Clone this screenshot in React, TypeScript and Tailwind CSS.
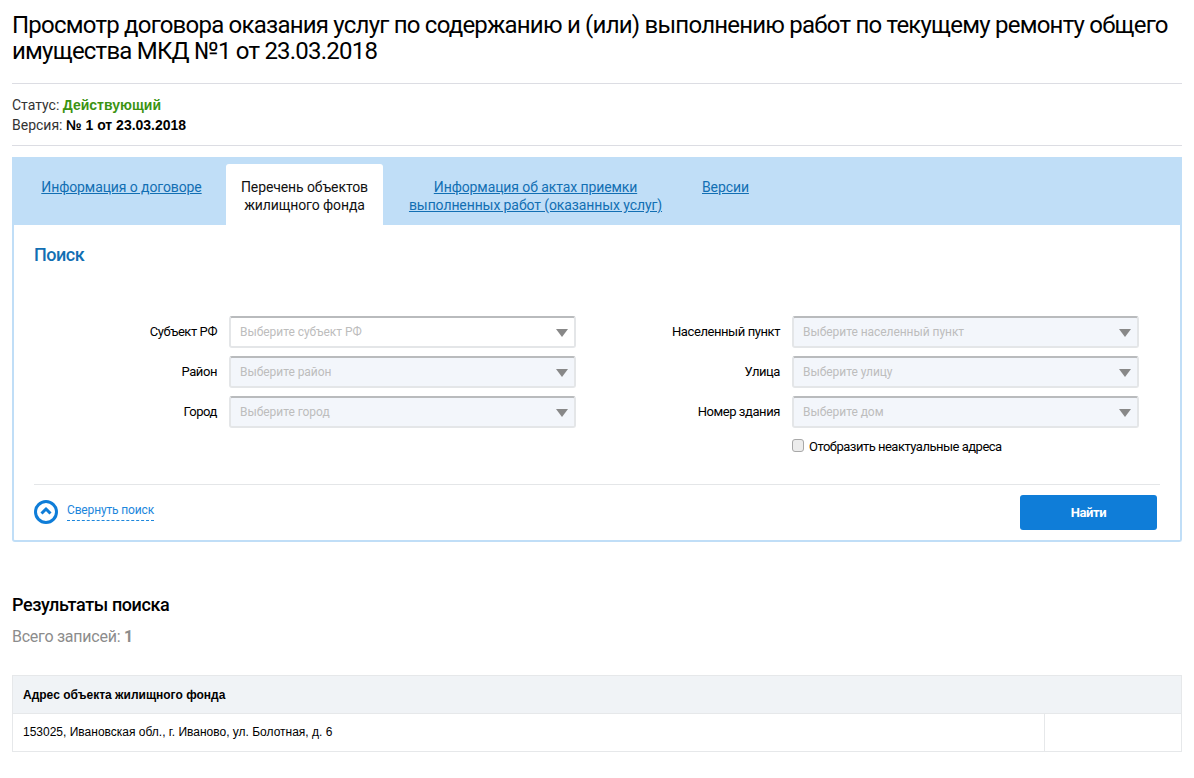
import React from 'react';

const Select = ({ text, active = false }: { text: string; active?: boolean }) => (
  <div
    className={`flex items-center justify-between w-[347px] h-[32px] rounded-[3px] border-2 border-[#e4e6e8] border-t-[#b9bbbd] pl-[9px] pr-[6px] ${
      active ? 'bg-white' : 'bg-[#f3f6fb]'
    }`}
  >
    <span className="text-[12px] tracking-[-0.05px] text-[#bdbdbd]">{text}</span>
    <svg width="12" height="8" viewBox="0 0 12 8" className="mt-px">
      <path d="M0 0h12L6 8z" fill="#888888" />
    </svg>
  </div>
);

const Field = ({ label, labelWidth, children }: { label: string; labelWidth: string; children: React.ReactNode }) => (
  <div className="flex items-center gap-[12px]">
    <span className={`${labelWidth} text-right text-[13px] tracking-[-0.42px] text-black`}>{label}</span>
    {children}
  </div>
);

export default function App() {
  return (
    <div className="min-h-[778px] bg-white px-[12px] font-['Roboto',sans-serif] text-black overflow-hidden">
      <h1 className="pt-[12px] pb-[19px] text-[24px] leading-[26px] tracking-[-0.78px] border-b border-[#dcdde3]">
        Просмотр договора оказания услуг по содержанию и (или) выполнению работ по текущему ремонту общего имущества МКД №1 от 23.03.2018
      </h1>

      <div className="pt-[11px] pb-[10px] text-[14px] leading-[20px] border-b border-[#dcdde3]">
        <div>
          <span className="text-[#333333]">Статус: </span>
          <b className="font-['Liberation_Sans',sans-serif] text-[#3b9312]">Действующий</b>
        </div>
        <div>
          <span className="text-[#333333]">Версия: </span>
          <b className="font-['Liberation_Sans',sans-serif]">№ 1 от 23.03.2018</b>
        </div>
      </div>

      <div className="mt-[11px] h-[68px] bg-[#c0def7] flex items-end text-[14px] leading-[18px] tracking-[-0.1px]">
        <div className="w-[214px] h-[61px] pt-[14px] pl-[5px] text-center">
          <a className="text-[#126fb3] underline">Информация о договоре</a>
        </div>
        <div className="w-[157px] h-[61px] pt-[14px] text-center bg-white rounded-t-[3px] text-[#111111]">
          Перечень объектов
          <br />
          жилищного фонда
        </div>
        <div className="w-[305px] h-[61px] pt-[14px] text-center">
          <a className="text-[#126fb3] underline">
            Информация об актах приемки
            <br />
            выполненных работ (оказанных услуг)
          </a>
        </div>
        <div className="h-[61px] pt-[14px] ml-[14px]">
          <a className="text-[#126fb3] underline">Версии</a>
        </div>
      </div>

      <div className="h-[317px] border-2 border-t-0 border-[#c0def7] rounded-b-[3px] px-[20px] pt-[19px]">
        <h2 className="text-[18px] leading-[22px] font-medium tracking-[-0.5px] text-[#126fb3]">Поиск</h2>

        <div className="flex mt-[50px] h-[168px]">
          <div className="flex flex-col gap-[8px]">
            <Field label="Субъект РФ" labelWidth="w-[183px]">
              <Select text="Выберите субъект РФ" active />
            </Field>
            <Field label="Район" labelWidth="w-[183px]">
              <Select text="Выберите район" />
            </Field>
            <Field label="Город" labelWidth="w-[183px]">
              <Select text="Выберите город" />
            </Field>
          </div>
          <div className="flex flex-col gap-[8px] ml-[16px]">
            <Field label="Населенный пункт" labelWidth="w-[188px]">
              <Select text="Выберите населенный пункт" />
            </Field>
            <Field label="Улица" labelWidth="w-[188px]">
              <Select text="Выберите улицу" />
            </Field>
            <Field label="Номер здания" labelWidth="w-[188px]">
              <Select text="Выберите дом" />
            </Field>
            <div className="flex items-center ml-[200px] mt-[3px] gap-[5px]">
              <span className="w-[12px] h-[13px] -mt-[3px] rounded-[3px] border border-[#a8a8a8] bg-[#ececec]" />
              <span className="text-[13px] leading-[16px] tracking-[-0.5px]">Отобразить неактуальные адреса</span>
            </div>
          </div>
        </div>

        <div className="border-t border-[#e4e6e8] flex justify-between pt-[10px]">
          <div className="flex items-start pt-[5px]">
            <svg width="24" height="24" viewBox="0 0 24 24">
              <circle cx="12" cy="12" r="10.5" fill="none" stroke="#0f7dd8" strokeWidth="3" />
              <path d="M7.5 13.5l4.5-4.5 4.5 4.5" fill="none" stroke="#0f7dd8" strokeWidth="3" />
            </svg>
            <a className="ml-[9px] mt-[1px] text-[12px] leading-[18px] pb-[1px] tracking-[-0.15px] text-[#1c86dc] border-b border-dashed border-[#1c86dc]">
              Свернуть поиск
            </a>
          </div>
          <button className="w-[137px] h-[35px] mr-[3px] rounded-[3px] bg-[#0f7dd8] text-white text-[13px] font-bold tracking-[-0.4px]">
            Найти
          </button>
        </div>
      </div>

      <h3 className="mt-[52px] text-[18px] leading-[22px] font-medium tracking-[-0.4px]">Результаты поиска</h3>
      <div className="mt-[11px] text-[16px] leading-[20px] tracking-[-0.25px] text-[#8c8c8c]">
        Всего записей: <b>1</b>
      </div>

      <div className="mt-[28px] border border-[#e6e8ea]">
        <div className="h-[38px] bg-[#f0f3f6] border-b border-[#e6e8ea] flex items-center pl-[10px] text-[12px] font-bold font-['Liberation_Sans',sans-serif]">
          Адрес объекта жилищного фонда
        </div>
        <div className="h-[37px] flex">
          <div className="flex-1 flex items-center pl-[10px] pb-[1px] text-[12px] font-['Liberation_Sans',sans-serif] border-r border-[#e6e8ea]">
            153025, Ивановская обл., г. Иваново, ул. Болотная, д. 6
          </div>
          <div className="w-[136px]" />
        </div>
      </div>
    </div>
  );
}
